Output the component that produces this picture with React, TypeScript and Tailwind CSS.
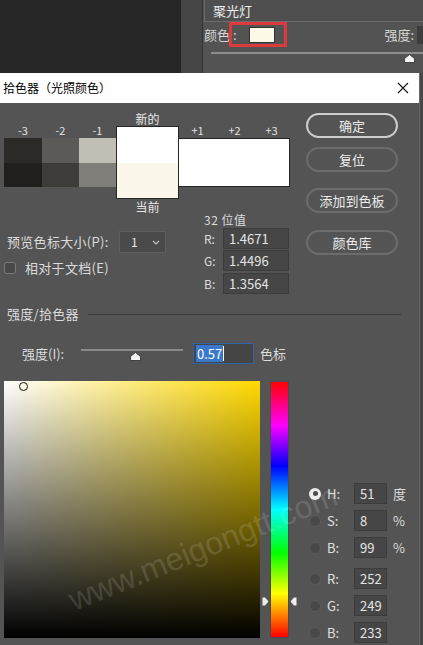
import React from "react";

const font = "font-['Noto_Sans_CJK_SC','Noto_Sans',sans-serif]";

function Thumb({ className = "" }: { className?: string }) {
  return (
    <svg width="11" height="9" viewBox="0 0 11 9" className={className}>
      <path d="M5.5 0.5 L10.5 4.5 L10.5 8.5 L0.5 8.5 L0.5 4.5 Z" fill="#f4f4f4" stroke="#2a2a2a" strokeWidth="0.8" />
    </svg>
  );
}

function Radio({ on = false }: { on?: boolean }) {
  return on ? (
    <div className="w-[12px] h-[12px] rounded-full bg-[#ececec] flex items-center justify-center">
      <div className="w-[5px] h-[5px] rounded-full bg-[#4a4a4a]" />
    </div>
  ) : (
    <div className="w-[12px] h-[12px] rounded-full bg-[#484848] border border-[#5c5c5c]" />
  );
}

const fields = [
  { k: "H:", v: "51", unit: "度", on: true, gap: "" },
  { k: "S:", v: "8", unit: "%", gap: "mt-[6px]" },
  { k: "B:", v: "99", unit: "%", gap: "mt-[6px]" },
  { k: "R:", v: "252", unit: "", gap: "mt-[10px]" },
  { k: "G:", v: "249", unit: "", gap: "mt-[6px]" },
  { k: "B:", v: "233", unit: "", gap: "mt-[6px]" },
];

const small = [
  { l: "-3", w: "w-[38px]", top: "bg-[#2b2a27]", bot: "bg-[#201f1d]" },
  { l: "-2", w: "w-[37px]", top: "bg-[#5b5a56]", bot: "bg-[#3d3c39]" },
  { l: "-1", w: "w-[37px]", top: "bg-[#c0beb5]", bot: "bg-[#807e78]" },
];

export default function App() {
  return (
    <div className={`relative w-[423px] h-[645px] overflow-hidden bg-[#474747] ${font}`}>
      {/* background panel */}
      <div className="flex h-[73px]">
        <div className="w-[181px] bg-[#262626]" />
        <div className="w-[22px] bg-[#464646] border-r border-[#333]" />
        <div className="flex-1 bg-[#535353] flex flex-col">
          <div className="h-[22px] ml-[1px] border-l border-b border-[#6c6c6c] bg-[#4f4f4f] pl-[8px] text-[13px] leading-[21px] text-[#eeeeee]">
            聚光灯
          </div>
          <div className="flex items-center h-[25px] text-[13px] text-[#d8d8d8]">
            <span className="ml-[1px]">颜色</span>
            <div className="ml-[-1px] w-[58px] h-[25px] border-[3px] border-[#dd3b3b] flex items-center">
              <span className="ml-[1px] w-[16px]">:</span>
              <div className="w-[26px] h-[16px] bg-[#fcf9e9] border border-[#333]" />
            </div>
            <span className="ml-auto mr-[3px]">强度:</span>
            <div className="w-[6px] h-[18px] bg-[#3d3d3d]" />
          </div>
          <div className="relative h-[26px]">
            <div className="absolute left-[8px] right-0 top-[5px] h-[2px] bg-[#8c8c8c]" />
            <Thumb className="absolute left-[201px] top-[7px]" />
          </div>
        </div>
      </div>

      {/* dialog */}
      <div className="w-[420px] h-[572px] border-r border-[#6a6a6a] flex flex-col">
        <div className="h-[30px] bg-white flex items-center pl-[3px] pr-[10px] text-[12px] text-black">
          <span>拾色器（光照颜色）</span>
          <svg width="12" height="12" viewBox="0 0 12 12" className="ml-auto">
            <path d="M1 1 L11 11 M11 1 L1 11" stroke="#111" strokeWidth="1.1" />
          </svg>
        </div>

        <div className="flex-1 bg-[#545454] text-[#dcdcdc] text-[12px]">
          {/* upper block */}
          <div className="flex h-[192px]">
            <div className="w-[306px] flex flex-col">
              <div className="flex h-[95px] pl-[4px]">
                {small.map((s) => (
                  <div key={s.l} className={`${s.w} flex flex-col pt-[20px]`}>
                    <div className="h-[15px] leading-[15px] text-center text-[11px] text-[#e2e2e2]">{s.l}</div>
                    <div className={`h-[25px] ${s.top}`} />
                    <div className={`h-[24px] ${s.bot}`} />
                  </div>
                ))}
                <div className="w-[63px] flex flex-col pt-[9px]">
                  <div className="h-[14px] leading-[14px] text-center text-[#e8e8e8]">新的</div>
                  <div className="border border-[#262626] flex flex-col">
                    <div className="h-[36px] bg-[#fefefe]" />
                    <div className="h-[35px] bg-[#fbf8eb]" />
                  </div>
                </div>
                <div className="w-[111px] flex flex-col pt-[20px]">
                  <div className="h-[15px] flex text-[11px] leading-[15px] text-[#e2e2e2]">
                    <span className="w-[37px] text-center">+1</span>
                    <span className="w-[37px] text-center">+2</span>
                    <span className="w-[37px] text-center">+3</span>
                  </div>
                  <div className="h-[49px] bg-white border border-l-0 border-[#262626]" />
                </div>
              </div>

              <div className="flex">
                <div className="w-[204px] flex flex-col">
                  <div className="h-[16px] pl-[116px]">
                    <div className="w-[63px] text-center leading-[18px] text-[#e8e8e8]">当前</div>
                  </div>
                  <div className="mt-[17px] h-[22px] flex items-center">
                    <span className="w-[119px] pl-[7px] text-[13px] tracking-[0.3px]">预览色标大小(P):</span>
                    <div className="w-[47px] h-[22px] bg-[#4a4a4a] border border-[#5f5f5f] flex items-center pl-[11px] pr-[5px]">
                      <span className="text-[12px] text-[#e6e6e6]">1</span>
                      <svg width="8" height="5" viewBox="0 0 8 5" className="ml-auto">
                        <path d="M1 1 L4 4 L7 1" stroke="#bdbdbd" strokeWidth="1.2" fill="none" />
                      </svg>
                    </div>
                  </div>
                  <div className="mt-[8px] h-[14px] flex items-center pl-[4px]">
                    <div className="w-[12px] h-[12px] rounded-[3px] bg-[#484848] border border-[#7a7a7a]" />
                    <span className="ml-[9px] text-[13px] tracking-[0.3px]">相对于文档(E)</span>
                  </div>
                </div>
                <div className="flex flex-col pt-[15px]">
                  <div className="h-[14px] leading-[14px] tracking-[0.5px]">32 位值</div>
                  {[
                    ["R:", "1.4671", "mt-[1px]"],
                    ["G:", "1.4496", "mt-[1px]"],
                    ["B:", "1.3564", "mt-[2px]"],
                  ].map(([k, v, m]) => (
                    <div key={k} className={`flex items-center h-[21px] ${m}`}>
                      <span className="w-[19px]">{k}</span>
                      <div className="w-[66px] h-[21px] bg-[#464646] border border-[#3c3c3c] pl-[5px] leading-[19px] text-[13px] text-[#e4e4e4]">
                        {v}
                      </div>
                    </div>
                  ))}
                </div>
              </div>
            </div>

            <div className="w-[92px] flex flex-col pt-[10px] text-[13px] text-[#ececec]">
              <div className="h-[25px] rounded-full border-2 border-[#cdcdcd] flex items-center justify-center">确定</div>
              <div className="mt-[9px] h-[25px] rounded-full border-2 border-[#6c6c6c] flex items-center justify-center">复位</div>
              <div className="mt-[16px] h-[25px] rounded-full border-2 border-[#6c6c6c] flex items-center justify-center">添加到色板</div>
              <div className="mt-[17px] h-[25px] rounded-full border-2 border-[#6c6c6c] flex items-center justify-center">颜色库</div>
            </div>
          </div>

          {/* section header */}
          <div className="mt-[12px] h-[14px] flex items-center pl-[7px] pr-[18px]">
            <span className="text-[13px] tracking-[0.3px]">强度/拾色器</span>
            <div className="ml-[9px] flex-1 h-[1px] bg-[#3a3a3a]" />
          </div>

          {/* intensity */}
          <div className="mt-[22px] h-[21px] flex items-center text-[13px]">
            <span className="pl-[22px] w-[81px]">强度(I):</span>
            <div className="relative w-[102px] h-[21px]">
              <div className="absolute left-0 right-0 top-[6px] h-[2px] bg-[#8a8a8a]" />
              <Thumb className="absolute left-[49px] top-[9px]" />
            </div>
            <div className="ml-[10px] w-[61px] h-[21px] bg-[#454545] border border-[#2f64ab] flex items-center pl-[2px]">
              <span className="bg-[#3a78cc] text-white text-[13px] leading-[17px] px-[1px]">0.57</span>
              <div className="w-[1px] h-[15px] bg-white" />
            </div>
            <span className="ml-[6px]">色标</span>
          </div>

          {/* picker */}
          <div className="mt-[17px] flex">
            <div className="ml-[4px] relative w-[256px] h-[257px] bg-[linear-gradient(to_top,#000,transparent),linear-gradient(to_right,#fff,#ffd900)]">
              <div className="absolute left-[15px] top-[1px] w-[9px] h-[9px] rounded-full border border-[#111]" />
            </div>
            <div className="relative w-[38px] h-[257px]">
              <div className="ml-[10px] w-[19px] h-[257px] border border-[#4a4a4a] bg-[linear-gradient(to_bottom,#ff0000,#ff00ff_17%,#0000ff_33%,#00ffff_50%,#00ff00_67%,#ffff00_83%,#ff0000)]" />
              <svg width="7" height="9" viewBox="0 0 7 9" className="absolute left-[2px] top-[216px]">
                <path d="M0.5 0.5 L3 0.5 L6.5 4.5 L3 8.5 L0.5 8.5 Z" fill="#eee" />
              </svg>
              <svg width="7" height="9" viewBox="0 0 7 9" className="absolute left-[30px] top-[216px]">
                <path d="M6.5 0.5 L4 0.5 L0.5 4.5 L4 8.5 L6.5 8.5 Z" fill="#eee" />
              </svg>
            </div>
            <div className="ml-[11px] pt-[102px] flex flex-col text-[13px]">
              {fields.map((f, i) => (
                <div key={i} className={`h-[21px] flex items-center ${f.gap}`}>
                  <Radio on={f.on} />
                  <span className="ml-[6px] w-[27px] text-[#e0e0e0]">{f.k}</span>
                  <div className="w-[33px] h-[21px] bg-[#464646] border border-[#3c3c3c] pl-[5px] leading-[19px] text-[#e4e4e4]">
                    {f.v}
                  </div>
                  <span className="ml-[6px] text-[#dcdcdc]">{f.unit}</span>
                </div>
              ))}
            </div>
          </div>
        </div>
      </div>

      {/* watermark */}
      <div className="absolute left-[76px] top-[584px] origin-bottom-left rotate-[-22deg] whitespace-nowrap font-['Liberation_Sans',sans-serif] text-[32px] leading-[32px] text-white/15 pointer-events-none">
        www.meigongtt.com
      </div>
    </div>
  );
}
